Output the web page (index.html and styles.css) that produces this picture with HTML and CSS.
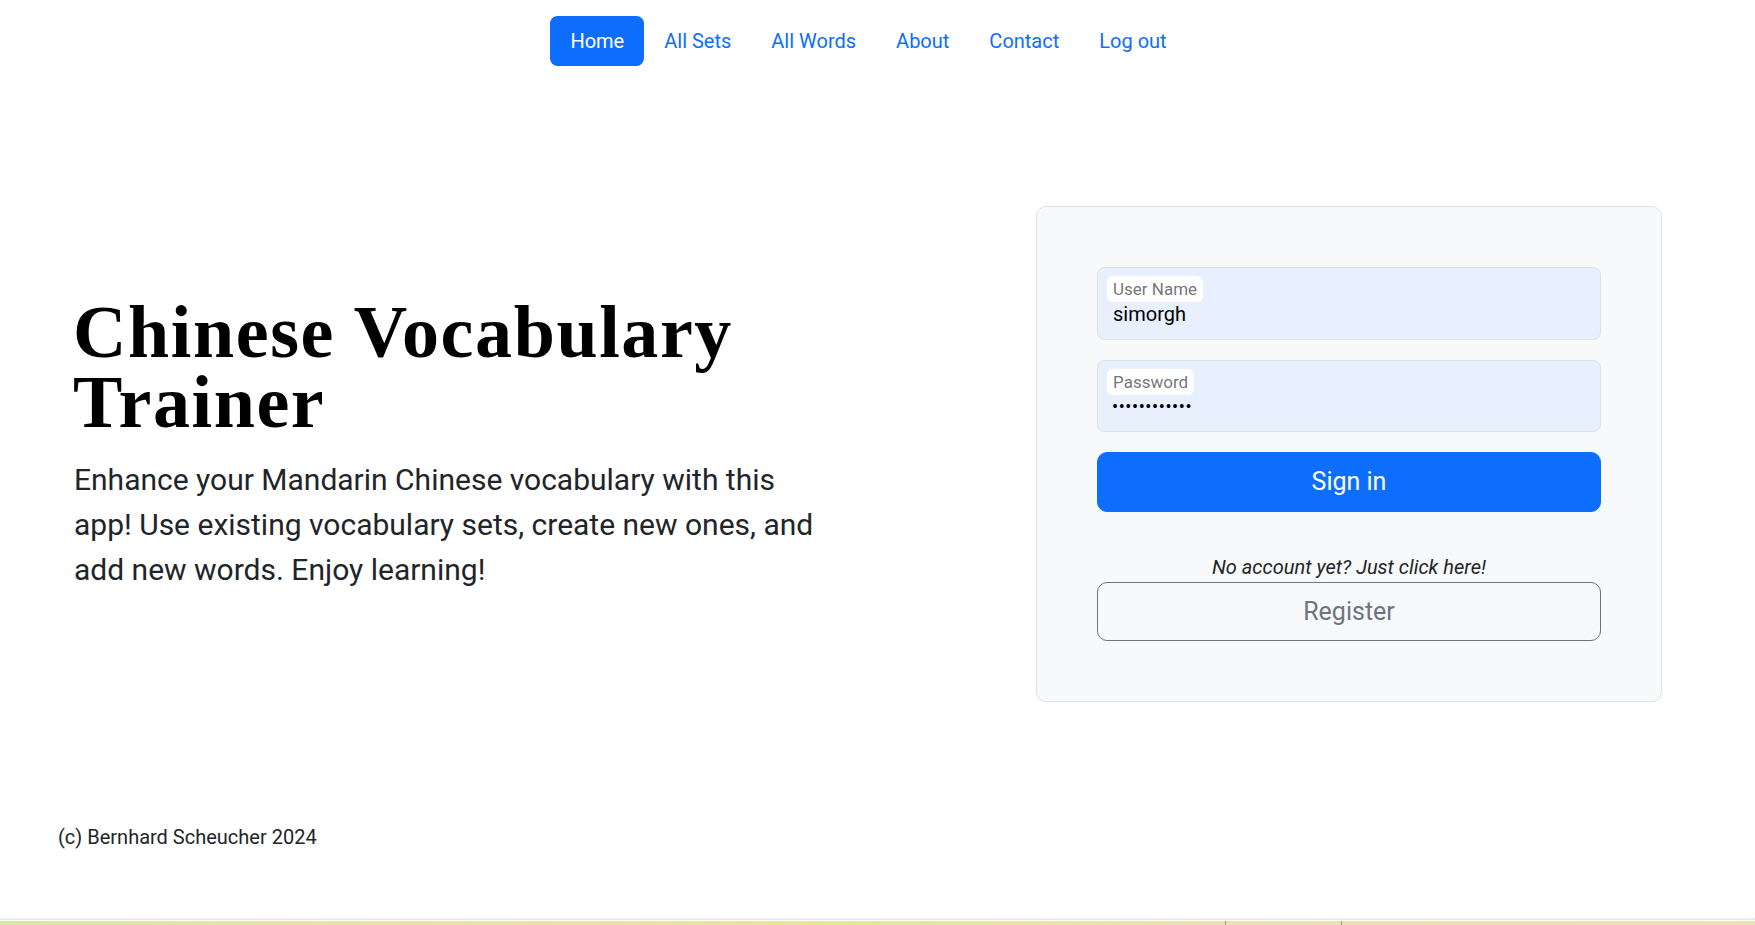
FILE: index.html
```html
<!DOCTYPE html>
<html lang="en">
<head>
<meta charset="utf-8">
<title>Chinese Vocabulary Trainer</title>
<link rel="stylesheet" href="styles.css">
</head>
<body>
<div class="page">
  <header class="topnav">
    <nav class="pills">
      <a class="pill active" href="#">Home</a>
      <a class="pill" href="#">All Sets</a>
      <a class="pill" href="#">All Words</a>
      <a class="pill" href="#">About</a>
      <a class="pill" href="#">Contact</a>
      <a class="pill" href="#">Log out</a>
    </nav>
  </header>

  <main class="hero">
    <section class="intro">
      <h1 class="title">Chinese Vocabulary Trainer</h1>
      <p class="lead">Enhance your Mandarin Chinese vocabulary with this app! Use existing vocabulary sets, create new ones, and add new words. Enjoy learning!</p>
    </section>

    <form class="card">
      <div class="field">
        <span class="field-label">User Name</span>
        <span class="field-value">simorgh</span>
      </div>
      <div class="field">
        <span class="field-label">Password</span>
        <span class="field-value dots">••••••••••••</span>
      </div>
      <button class="btn btn-primary" type="button">Sign in</button>
      <p class="hint">No account yet? Just click here!</p>
      <button class="btn btn-outline" type="button">Register</button>
    </form>
  </main>

  <footer class="footer">(c) Bernhard Scheucher 2024</footer>

  <div class="statusbar">
    <div class="statusbar-line"></div>
    <div class="statusbar-strip">
      <span class="tick tick-a"></span>
      <span class="tick tick-b"></span>
    </div>
  </div>
</div>
</body>
</html>
```

FILE: styles.css
```css
* { box-sizing: border-box; }

html, body {
  margin: 0;
  padding: 0;
  background: #ffffff;
}

body {
  font-family: Roboto, "Liberation Sans", Arial, sans-serif;
  color: #212529;
}

.page {
  height: 925px;
  display: flex;
  flex-direction: column;
  overflow: hidden;
}

/* ---------- nav ---------- */
.topnav {
  display: flex;
  justify-content: center;
  padding: 16px 18px 0 0;
}

.pills {
  display: flex;
}

.pill {
  display: block;
  font-size: 20px;
  line-height: 30px;
  padding: 10px 20px;
  color: #0d6efd;
  text-decoration: none;
  border-radius: 7.5px;
}

.pill.active {
  background: #0d6efd;
  color: #ffffff;
}

/* ---------- hero ---------- */
.hero {
  display: flex;
  align-items: center;
  justify-content: space-between;
  margin-top: 140px;
  padding: 0 93px 0 70px;
}

.intro {
  width: 760px;
  padding-top: 1px;
}

.title {
  font-family: "Liberation Serif", "Times New Roman", serif;
  font-weight: 700;
  font-size: 74px;
  line-height: 70px;
  color: #000000;
  margin: 0 0 20px 3px;
  letter-spacing: 1.6px;
}

.lead {
  font-size: 30px;
  line-height: 45px;
  margin: 0 0 20px 4px;
  max-width: 750px;
  color: #212529;
}

/* ---------- card ---------- */
.card {
  width: 626px;
  padding: 60px;
  background: #f8f9fa;
  border: 1px solid #dee2e6;
  border-radius: 10px;
  display: flex;
  flex-direction: column;
}

.field {
  height: 72.5px;
  background: #e8f0fe;
  border: 1px solid #dee2e6;
  border-radius: 7.5px;
  padding: 8px 0 0 9px;
  display: flex;
  flex-direction: column;
  align-items: flex-start;
  margin-bottom: 20px;
}

.field-label {
  display: block;
  height: 26px;
  line-height: 26px;
  padding: 0 6px;
  font-size: 17px;
  color: rgba(33, 37, 41, 0.65);
  background: #ffffff;
  border-radius: 6px;
}

.field-value {
  display: block;
  margin-left: 6px;
  font-size: 20px;
  line-height: 24px;
  color: #000000;
}

.field-value.dots {
  font-size: 18px;
  letter-spacing: 0.6px;
  line-height: 24px;
  margin-left: 5px;
}

.btn {
  display: block;
  width: 100%;
  height: 60px;
  font-family: Roboto, "Liberation Sans", Arial, sans-serif;
  font-size: 25px;
  line-height: 37.5px;
  border-radius: 10px;
  padding: 0;
  cursor: pointer;
}

.btn-primary {
  background: #0d6efd;
  border: 1px solid #0d6efd;
  color: #ffffff;
}

.btn-outline {
  background: transparent;
  border: 1px solid #6c757d;
  color: #6c757d;
  height: 59px;
}

.hint {
  margin: 40px 0 0 0;
  font-size: 20px;
  line-height: 30px;
  font-style: italic;
  text-align: center;
  color: #212529;
}

/* ---------- footer ---------- */
.footer {
  margin-top: 120px;
  padding-left: 58px;
  font-size: 20px;
  line-height: 30px;
  color: #212529;
}

/* ---------- bottom strip ---------- */
.statusbar {
  margin-top: auto;
  height: 7px;
  display: flex;
  flex-direction: column;
}

.statusbar-line {
  height: 3px;
  background: linear-gradient(#f0f0f0, #e3e3e3);
  border-bottom: 1px solid #ffffff;
}

.statusbar-strip {
  flex: 1;
  display: flex;
  background: linear-gradient(90deg, #d8e6a8 0%, #e9e2a8 20%, #f0dea8 35%, #e4e6a0 50%, #ece0b0 70%, #f2dcb0 85%, #efe0b4 100%);
}

.tick {
  width: 1px;
  background: #9a9a80;
}

.tick-a { margin-left: 1225px; }
.tick-b { margin-left: 115px; }
```
